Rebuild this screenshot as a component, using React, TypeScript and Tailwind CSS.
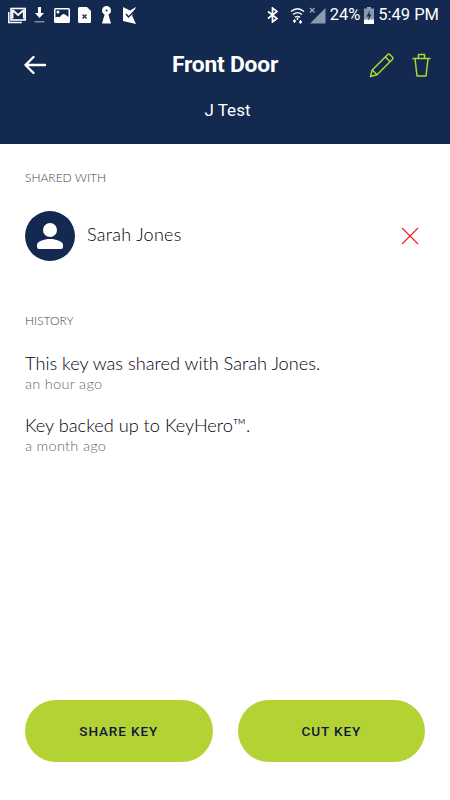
const Mail = () => (
  <svg width="18" height="17" viewBox="0 0 18 17" fill="none" stroke="#fff">
    <path d="M.8 5v10.500h13" strokeWidth="1.500" />
    <rect x="3" y="1.500" width="14.200" height="11.500" fill="#13294f" strokeWidth="1.600" />
    <path d="M4.500 3v8.500M15.800 3v8.500M4.500 3l5.600 5 5.700-5" strokeWidth="1.800" />
  </svg>
);
const Download = () => (
  <svg width="11" height="18" viewBox="0 0 11 18">
    <path d="M4 1h3v6h3L5.500 12 1 7h3z" fill="#fff" />
    <rect x="0.500" y="15" width="10" height="1.500" fill="#7c8aa3" />
  </svg>
);
const Picture = () => (
  <svg width="16" height="15" viewBox="0 0 16 15">
    <rect width="16" height="15" rx="1.500" fill="#fff" />
    <path d="M1.500 1.500h13v7.500c-2-1.500-3.500-3-5-3-2 0-3 3-4 3s-2-1-4 .5z" fill="#13294f" />
    <circle cx="4" cy="4" r="1.500" fill="#fff" />
  </svg>
);
const FileX = () => (
  <svg width="13" height="16" viewBox="0 0 13 16">
    <path d="M1.500 0H9l4 4v10.500a1.500 1.500 0 0 1-1.500 1.500h-10A1.500 1.500 0 0 1 0 14.500v-13A1.500 1.500 0 0 1 1.500 0z" fill="#fff" />
    <path d="M4.500 7.500l4 4M8.500 7.500l-4 4" stroke="#13294f" strokeWidth="1.300" />
  </svg>
);
const Keyhole = () => (
  <svg width="11" height="18" viewBox="0 0 11 18">
    <path d="M5.500 0a4.500 4.500 0 0 1 2 8.500L8 10.500 10 17.500H1l2-7 .5-2A4.500 4.500 0 0 1 5.500 0z" fill="#fff" />
    <circle cx="5.500" cy="4.500" r="1" fill="#13294f" />
  </svg>
);
const Check = () => (
  <svg width="14" height="17" viewBox="0 0 14 17">
    <path d="M0 0l7 3.500L13 0 9 8.500l4 8.500-13-3z" fill="#fff" />
    <path d="M3 7l2.500 3L12.500 3" fill="none" stroke="#13294f" strokeWidth="1.500" />
  </svg>
);
const Bluetooth = () => (
  <svg width="11" height="16" viewBox="0 0 11 16" fill="none" stroke="#fff" strokeWidth="1.700">
    <path d="M1 4.500l9 7L5.500 15V1L10 4.500l-9 7" />
  </svg>
);
const Wifi = () => (
  <svg width="15" height="17" viewBox="0 0 15 17" fill="none" stroke="#fff" strokeWidth="1.400">
    <path d="M1 4.500c4-3.500 9-3.500 13 0M3 7.500c3-2.500 6-2.500 9 0M5 10.300c2-1.300 3-1.300 5 0" />
    <circle cx="7.500" cy="12" r="1" fill="#fff" stroke="none" />
    <path d="M4.500 13v3M3.200 14.500l1.300-1.500 1.300 1.500M10.500 16v-3M9.200 14.500l1.300 1.500 1.300-1.500" strokeWidth="1.200" />
  </svg>
);
const Signal = () => (
  <svg width="17" height="17" viewBox="0 0 17 17">
    <path d="M16.500 1v15.500H1z" fill="#8d99ad" />
    <path d="M1 1l4.500 4.500M5.500 1L1 5.500" stroke="#aab3c2" strokeWidth="1.100" />
  </svg>
);
const Battery = () => (
  <svg width="10" height="17" viewBox="0 0 10 17">
    <rect x="3" y="0" width="4" height="2" fill="#9aa5b7" />
    <rect x="0" y="1.500" width="10" height="15.500" fill="#8d99ad" />
    <rect x="0" y="12.500" width="10" height="4.500" fill="#fff" />
    <path d="M6 3L2.500 9.500h2.300L3.800 14 7.500 7.500H5.200z" fill="#13294f" />
  </svg>
);
const Back = () => (
  <svg width="24" height="20" viewBox="0 0 24 20" fill="none" stroke="#fff" strokeWidth="2.400" strokeLinecap="round" strokeLinejoin="round">
    <path d="M22 10H2.500M10.500 2l-8 8 8 8" />
  </svg>
);
const Pencil = () => (
  <svg width="25" height="25" viewBox="0 0 25 25" fill="none" stroke="#b3d334" strokeWidth="1.500" strokeLinejoin="round">
    <path d="M1.500 23.500l1.700-6.500L18.500 1.700a1.800 1.800 0 0 1 2.500 0l2.300 2.300a1.800 1.800 0 0 1 0 2.500L8 21.800z" />
    <path d="M3.200 17L8 21.800M16.300 3.900l4.800 4.800" />
  </svg>
);
const Trash = () => (
  <svg width="19" height="24" viewBox="0 0 19 24" fill="none" stroke="#b3d334" strokeWidth="1.500" strokeLinejoin="round">
    <path d="M.5 5.500h18M6.500 5.500V1.500h6v4M3 5.500L5 23h9l2-17.500" />
  </svg>
);
const Person = () => (
  <svg width="26" height="26" viewBox="0 0 26 26" fill="#fff">
    <circle cx="13" cy="7" r="7" />
    <path d="M0 24v-2.500C0 18.500 7 16 13 16s13 2.500 13 5.500V24a2 2 0 0 1-2 2H2a2 2 0 0 1-2-2z" />
  </svg>
);
const Cross = () => (
  <svg width="18" height="18" viewBox="0 0 18 18" stroke="#f01a24" strokeWidth="1.100">
    <path d="M1 1l16 16M17 1L1 17" />
  </svg>
);

const body = { fontFamily: "Lato, 'Noto Sans', sans-serif" };
const head = { fontFamily: "Roboto, 'Liberation Sans', sans-serif" };

const Section = ({ children }: { children: string }) => (
  <h2 className="text-[12px] leading-[16px] font-light text-[#44444c]" style={body}>{children}</h2>
);

const Hist = ({ text, when }: { text: string; when: string }) => (
  <div>
    <p className="text-[18.200px] leading-[21px] font-light text-[#000008]">{text}</p>
    <p className="mt-[1px] text-[14.500px] leading-[18px] font-light tracking-[0.3px] text-[#666678]">{when}</p>
  </div>
);

const Btn = ({ children }: { children: string }) => (
  <button className="flex h-[62px] flex-1 items-center justify-center rounded-full bg-[#b3d334] text-[13.500px] font-medium tracking-[0.9px] text-[#10163f]" style={head}>
    {children}
  </button>
);

export default function App() {
  return (
    <div className="flex h-[800px] w-[450px] flex-col overflow-hidden bg-white" style={body}>
      <header className="h-[144px] shrink-0 bg-[#13294f] text-white" style={head}>
        <div className="flex h-[30px] items-center justify-between pl-[8px] pr-[11px]">
          <div className="flex items-center">
            <Mail />
            <span className="ml-[8px]"><Download /></span>
            <span className="ml-[9px]"><Picture /></span>
            <span className="ml-[8px]"><FileX /></span>
            <span className="ml-[10px]"><Keyhole /></span>
            <span className="ml-[11px]"><Check /></span>
          </div>
          <div className="flex items-center gap-[4px]">
            <Bluetooth />
            <span className="w-[4px]" />
            <Wifi />
            <Signal />
            <span className="text-[16.500px] leading-none">24%</span>
            <Battery />
            <span className="text-[16.500px] leading-none">5:49 PM</span>
          </div>
        </div>
        <div className="grid h-[70px] grid-cols-[1fr_auto_1fr] items-center px-[19px]">
          <span className="pl-[4px]"><Back /></span>
          <h1 className="text-[22.800px] font-bold leading-none tracking-[-0.2px]">Front Door</h1>
          <div className="flex items-center justify-end gap-[18px]">
            <Pencil />
            <Trash />
          </div>
        </div>
        <p className="pl-[5px] text-center text-[17px] leading-[20px]">J Test</p>
      </header>
      <main className="flex flex-1 flex-col px-[25px]">
        <div className="mt-[26px]"><Section>SHARED WITH</Section></div>
        <div className="mt-[25px] flex items-center">
          <div className="flex h-[50px] w-[50px] items-center justify-center rounded-full bg-[#13294f]">
            <Person />
          </div>
          <span className="ml-[12px] -translate-y-[2px] text-[18px] font-light tracking-[0.3px] text-[#000008]">Sarah Jones</span>
          <span className="ml-auto mr-[6px]"><Cross /></span>
        </div>
        <div className="mt-[52px]"><Section>HISTORY</Section></div>
        <div className="mt-[24px] flex flex-col gap-[22px]">
          <Hist text="This key was shared with Sarah Jones." when="an hour ago" />
          <Hist text="Key backed up to KeyHero™." when="a month ago" />
        </div>
        <div className="mt-auto mb-[38px] flex gap-[25px]">
          <Btn>SHARE KEY</Btn>
          <Btn>CUT KEY</Btn>
        </div>
      </main>
    </div>
  );
}
